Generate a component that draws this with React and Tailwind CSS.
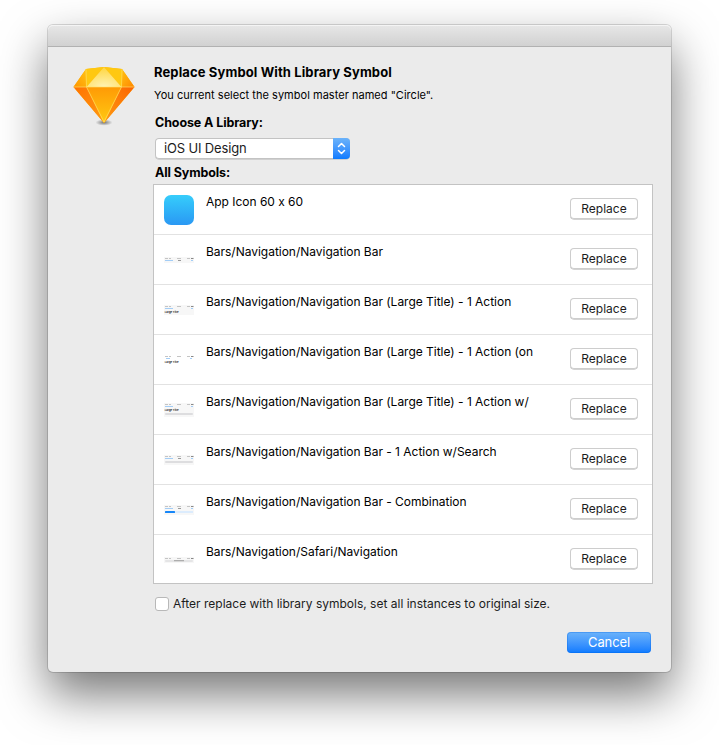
const symbols = [
  { name: 'App Icon 60 x 60', kind: 'app' },
  { name: 'Bars/Navigation/Navigation Bar', kind: 'bar' },
  { name: 'Bars/Navigation/Navigation Bar (Large Title) - 1 Action', kind: 'large' },
  { name: 'Bars/Navigation/Navigation Bar (Large Title) - 1 Action (on', kind: 'largeWhite' },
  { name: 'Bars/Navigation/Navigation Bar (Large Title) - 1 Action w/', kind: 'largeSearch' },
  { name: 'Bars/Navigation/Navigation Bar - 1 Action w/Search', kind: 'search' },
  { name: 'Bars/Navigation/Navigation Bar - Combination', kind: 'combo' },
  { name: 'Bars/Navigation/Safari/Navigation', kind: 'safari' },
];

const heights = { bar: 6, large: 10, largeWhite: 10, largeSearch: 14, search: 10, combo: 10, safari: 6 };

function Thumb({ kind }) {
  if (kind === 'app') {
    return <div className="size-[30px] rounded-[7px] bg-linear-to-b from-[#37cdfb] to-[#2b98f3]" />;
  }
  const h = heights[kind];
  const large = kind.startsWith('large');
  return (
    <svg width="30" height={h} viewBox={`0 0 30 ${h}`}>
      <rect width="30" height={h} fill={kind === 'largeWhite' ? '#ffffff' : '#f7f7f7'} />
      <path d="M1 1.5h3M5 1.5h2M13 1.5h4M23 1.5h3" stroke="#c4c4c4" strokeWidth="1" />
      <path d="M27 1.5h2.5" stroke="#888" strokeWidth="1" />
      {kind !== 'safari' && (
        <path
          d={kind === 'largeWhite' ? 'M2 3.5h4M26 3.5h2' : 'M1 3.5h8M27 3.5h2'}
          stroke="#a3cdf6"
          strokeWidth="1"
        />
      )}
      {(kind === 'bar' || kind === 'search' || kind === 'combo') && (
        <path d="M14 3.5h3" stroke="#999" strokeWidth="1" />
      )}
      {large && (
        <text x="0.8" y="8.4" fontSize="2.7" fontWeight="700" fontFamily="Inter, sans-serif" fill="#222">
          Large Title
        </text>
      )}
      {(kind === 'largeSearch' || kind === 'search') && (
        <rect x="1" y={h - 4} width="28" height="2" rx="1" fill="#dddddf" />
      )}
      {kind === 'combo' && (
        <>
          <rect x="1" y="6" width="10" height="2" rx="0.5" fill="#1686f8" />
          <rect x="11" y="6" width="18" height="2" fill="#dcecfd" />
        </>
      )}
      {kind === 'safari' && (
        <>
          <rect x="1" y="3" width="28" height="2" rx="1" fill="#e5e5e6" />
          <path d="M10 3.7h10" stroke="#8d8d8d" strokeWidth="0.8" />
        </>
      )}
    </svg>
  );
}

function SketchLogo() {
  return (
    <svg width="62" height="62" viewBox="0 0 62 62" className="block">
      <defs>
        <linearGradient id="front" x1="0" y1="0" x2="0" y2="1">
          <stop offset="0" stopColor="#ff9a05" />
          <stop offset="1" stopColor="#ffca12" />
        </linearGradient>
        <linearGradient id="sideL" x1="0" y1="0" x2="1" y2="1">
          <stop offset="0" stopColor="#ff7200" />
          <stop offset="1" stopColor="#ff9a14" />
        </linearGradient>
        <linearGradient id="sideR" x1="1" y1="0" x2="0" y2="1">
          <stop offset="0" stopColor="#fb6400" />
          <stop offset="1" stopColor="#ff9a14" />
        </linearGradient>
        <linearGradient id="edgeL" x1="0" y1="1" x2="1" y2="0">
          <stop offset="0" stopColor="#ff9500" />
          <stop offset="1" stopColor="#ffc414" />
        </linearGradient>
        <linearGradient id="edgeR" x1="1" y1="1" x2="0" y2="0">
          <stop offset="0" stopColor="#ff8500" />
          <stop offset="1" stopColor="#ffc414" />
        </linearGradient>
        <radialGradient id="crown" cx="0.5" cy="1" r="0.9">
          <stop offset="0" stopColor="#fff3b5" />
          <stop offset="1" stopColor="#ffd84a" />
        </radialGradient>
        <radialGradient id="ground">
          <stop offset="0" stopColor="#000" stopOpacity="0.5" />
          <stop offset="1" stopColor="#000" stopOpacity="0" />
        </radialGradient>
      </defs>
      <ellipse cx="31" cy="56.5" rx="8.5" ry="3.2" fill="url(#ground)" />
      <path d="M0.5 21 13 3 31 1 49 3 61.5 21 31 57Z" fill="#ffb400" />
      <path d="M0.5 21 13 3 13.5 21Z" fill="url(#edgeL)" />
      <path d="M61.5 21 49 3 48.5 21Z" fill="url(#edgeR)" />
      <path d="M13 3 31 1 13.5 21Z" fill="#ffc811" />
      <path d="M49 3 31 1 48.5 21Z" fill="#ffc811" />
      <path d="M31 1 48.5 21h-35Z" fill="url(#crown)" />
      <path d="M0.5 21h13L31 57Z" fill="url(#sideL)" />
      <path d="M61.5 21h-13L31 57Z" fill="url(#sideR)" />
      <path d="M13.5 21h35L31 57Z" fill="url(#front)" />
      <path
        d="M1 21h60M13.5 21 31 56 48.5 21M13 3.5l.5 17.5M49 3.5 48.5 21"
        fill="none"
        stroke="#ffe36e"
        strokeWidth="0.8"
        opacity="0.8"
      />
    </svg>
  );
}

export default function App() {
  return (
    <div className="h-[745px] w-[719px] overflow-hidden bg-white pt-[25px] pl-12 font-['Inter',sans-serif] text-[13px] text-black [font-feature-settings:'calt'_0]">
      <div className="h-[647px] w-[623px] rounded-[5px] bg-[#ebebeb] shadow-[0_0_0_1px_rgba(0,0,0,0.14),0_22px_48px_rgba(0,0,0,0.54)]">
        <div className="h-[22px] rounded-t-[5px] border-b border-[#b1b1b1] bg-linear-to-b from-[#e7e7e7] to-[#d1d1d1] shadow-[inset_0_1px_0_#f4f4f4]" />
        <div className="flex">
          <div className="w-[105px] shrink-0 pt-[19px] pl-[25px]">
            <SketchLogo />
          </div>
          <div className="flex w-[500px] flex-col pt-[14px] whitespace-nowrap">
            <h1 className="pl-px leading-[22px] font-bold tracking-[0.12px]">Replace Symbol With Library Symbol</h1>
            <p className="pl-px text-[11px] leading-6 tracking-[0.03px]">
              You current select the symbol master named "Circle".
            </p>
            <div className="h-[31px] pl-0.5 text-[12.5px] leading-8 font-bold tracking-[-0.1px]">Choose A Library:</div>
            <div className="ml-0.5 flex h-[21px] w-[195px] overflow-hidden rounded-[4px] bg-white shadow-[inset_0_0_0_1px_#c3c3c3,0_0.5px_0_#b5b5b5]">
              <div className="flex-1 pl-[9px] leading-[21px] tracking-[-0.15px] text-[#1c1c1c]">iOS UI Design</div>
              <div className="flex w-[17px] items-center justify-center bg-linear-to-b from-[#6bb3fa] to-[#0b7bff]">
                <svg width="9" height="13" viewBox="0 0 9 13" fill="none" stroke="#fff" strokeWidth="1.5" strokeLinecap="round" strokeLinejoin="round">
                  <path d="M1.5 4.5l3-3 3 3M1.5 8.5l3 3 3-3" />
                </svg>
              </div>
            </div>
            <div className="h-[25px] pt-[3px] pl-0.5 text-[12.5px] leading-[22px] font-bold tracking-[-0.1px]">
              All Symbols:
            </div>
            <ul className="h-[400px] border border-[#c3c3c3] bg-white">
              {symbols.map((s) => (
                <li key={s.name} className="flex h-[50px] border-b border-[#e2e2e2] last:h-[48px] last:border-0">
                  <div className="ml-[10px] flex h-[50px] w-[42px] items-center">
                    <Thumb kind={s.kind} />
                  </div>
                  <div className="flex-1 pt-2 text-[12px] leading-[18px] tracking-[-0.02px]">{s.name}</div>
                  <button className="mt-[13px] mr-[14px] h-[21px] w-[68px] rounded-[4px] bg-white text-[12px] leading-[21px] text-[#1c1c1c] shadow-[inset_0_0_0_1px_#cdcdcd,0_0.5px_0_#aaa]">
                    Replace
                  </button>
                </li>
              ))}
            </ul>
            <div className="mt-[13px] flex h-[14px] items-center pl-0.5">
              <span className="size-[14px] rounded-[3px] border border-[#b8b8b8] bg-white" />
              <span className="ml-1 text-[12px] text-[#1c1c1c]">
                After replace with library symbols, set all instances to original size.
              </span>
            </div>
            <button className="mt-[21px] mr-0.5 h-[21px] w-[84px] self-end rounded-[4px] bg-linear-to-b from-[#6bb3fa] to-[#087aff] leading-[21px] tracking-[-0.1px] text-white shadow-[inset_0_0_0_1px_rgba(0,100,230,0.3)]">
              Cancel
            </button>
          </div>
        </div>
      </div>
    </div>
  );
}
